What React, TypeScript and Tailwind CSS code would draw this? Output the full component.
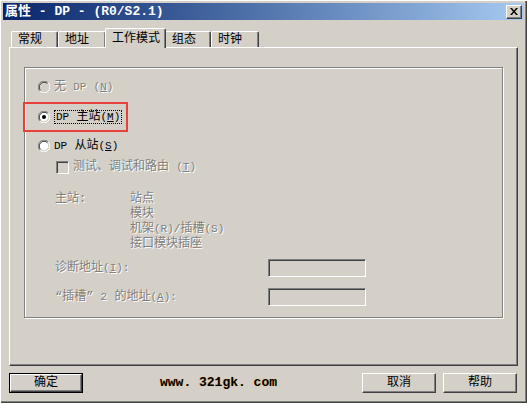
import React from "react";

const disabled = "text-[#808080] [text-shadow:1px_1px_0_#ffffff]";

// latin part in the half-width look of the old bitmap font
function L({ children }: { children: React.ReactNode }) {
  return <span className="text-[11px]">{children}</span>;
}

function Radio({ checked = false, off = false }: { checked?: boolean; off?: boolean }) {
  return (
    <svg width="12" height="12" viewBox="0 0 12 12" className="shrink-0">
      <circle cx="6" cy="6" r="4.6" fill={off ? "#d4d0c8" : "#ffffff"} />
      <path d="M1.8 10.2 A5.94 5.94 0 0 1 10.2 1.8" stroke="#808080" fill="none" />
      <path d="M10.2 1.8 A5.94 5.94 0 0 1 1.8 10.2" stroke="#ffffff" fill="none" />
      <path d="M2.54 9.46 A4.9 4.9 0 0 1 9.46 2.54" stroke="#404040" fill="none" />
      <path d="M9.46 2.54 A4.9 4.9 0 0 1 2.54 9.46" stroke="#d4d0c8" fill="none" />
      {checked && <circle cx="6" cy="6" r="2" fill="#000000" />}
    </svg>
  );
}

function Sunken({ className }: { className: string }) {
  return (
    <div
      className={`border border-t-[#808080] border-l-[#808080] border-b-white border-r-white bg-[#d4d0c8] shadow-[inset_1px_1px_0_#404040] ${className}`}
    />
  );
}

function Button({ label, isDefault = false, ml = "" }: { label: string; isDefault?: boolean; ml?: string }) {
  return (
    <div className={`${ml} w-[74px] h-[20px] ${isDefault ? "border border-black" : ""}`}>
      <div className="h-full border border-t-white border-l-white border-b-[#404040] border-r-[#404040] shadow-[inset_-1px_-1px_0_#808080] flex items-center justify-center text-[12px] text-black">
        {label}
      </div>
    </div>
  );
}

const tabs = [
  { label: "常规", w: "w-[47px]" },
  { label: "地址", w: "w-[48px]" },
  { label: "工作模式", w: "w-[61px]", active: true },
  { label: "组态", w: "w-[46px]" },
  { label: "时钟", w: "w-[48px]" },
];

export default function App() {
  return (
    <div className="relative w-[527px] h-[403px] bg-[#d4d0c8] flex flex-col shadow-[inset_1px_1px_0_#ffffff,inset_-1px_-1px_0_#404040,inset_-2px_-2px_0_#808080] font-['Liberation_Mono','Noto_Sans_CJK_SC',monospace] text-[12px] text-black overflow-hidden">
      {/* Title bar */}
      <div className="mx-[3px] mt-[3px] h-[17px] bg-linear-to-r from-[#0a246a] to-[#a6caf0] flex items-center justify-between pl-[2px] pr-[2px]">
        <span className="text-white font-bold text-[13px] leading-none">属性 - DP - (R0/S2.1)</span>
        <div className="w-[16px] h-[14px] bg-[#d4d0c8] border border-t-white border-l-white border-b-[#404040] border-r-[#404040] shadow-[inset_-1px_-1px_0_#808080] flex items-center justify-center">
          <svg width="8" height="7" viewBox="0 0 8 7">
            <path d="M0 0h2l2 2.5L6 0h2L5 3.5 8 7H6L4 4.5 2 7H0l3-3.5z" fill="#000" />
          </svg>
        </div>
      </div>

      {/* Tabs */}
      <div className="ml-[11px] mt-[8px] h-[19px] flex items-end">
        {tabs.map((t) => (
          <div
            key={t.label}
            className={`${t.w} ${
              t.active ? "h-[20px] -mb-[1px] -mx-[1px] z-10 pl-[6px]" : "h-[16px] pl-[6px]"
            } relative bg-[#d4d0c8] border-l border-t border-l-white border-t-white border-r border-r-[#404040] rounded-t-[2px] shadow-[inset_-1px_0_0_#808080] flex items-center text-[12px] leading-none`}
          >
            {t.label}
          </div>
        ))}
      </div>

      {/* Tab panel */}
      <div className="ml-[9px] w-[509px] h-[319px] border border-t-white border-l-white border-r-[#404040] border-b-[#404040] shadow-[inset_-1px_-1px_0_#808080] pt-[19px] pl-[14px]">
        <div className="w-[479px] h-[251px] border border-[#808080] shadow-[1px_1px_0_#ffffff,inset_1px_1px_0_#ffffff] pl-[13px]">
          <div className={`mt-[11px] h-[16px] flex items-center gap-[4px] ${disabled}`}>
            <Radio off />
            <span>
              无 <L>DP</L> <L>(<u>N</u>)</L>
            </span>
          </div>
          <div className="mt-[14px] h-[16px] flex items-center gap-[4px]">
            <Radio checked />
            <span className="border border-dotted border-black px-[1px] leading-[12px]">
              <L>DP</L> 主站<L>(<u>M</u>)</L>
            </span>
          </div>
          <div className="mt-[13px] h-[16px] flex items-center gap-[4px]">
            <Radio />
            <span>
              <L>DP</L> 从站<L>(<u>S</u>)</L>
            </span>
          </div>
          <div className={`mt-[5px] h-[16px] flex items-center gap-[4px] pl-[18px] ${disabled}`}>
            <Sunken className="w-[13px] h-[13px]" />
            <span>
              测试、调试和路由 <L>(<u>T</u>)</L>
            </span>
          </div>

          <div className={`mt-[17px] pl-[17px] flex leading-[15px] ${disabled}`}>
            <div className="w-[75px]">主站:</div>
            <div className="flex flex-col">
              <span>站点</span>
              <span>模块</span>
              <span>
                机架<L>(R)/</L>插槽<L>(S)</L>
              </span>
              <span>接口模块插座</span>
            </div>
          </div>

          <div className="mt-[7px] pl-[17px] flex items-center">
            <span className={`w-[213px] ${disabled}`}>
              诊断地址<L>(<u>I</u>):</L>
            </span>
            <Sunken className="w-[98px] h-[18px]" />
          </div>
          <div className="mt-[11px] pl-[17px] flex items-center">
            <span className={`w-[213px] ${disabled}`}>
              “插槽” <L>2</L> 的地址<L>(<u>A</u>):</L>
            </span>
            <Sunken className="w-[98px] h-[18px]" />
          </div>
        </div>
      </div>

      {/* Buttons */}
      <div className="mt-[7px] pl-[9px] flex items-center">
        <Button label="确定" isDefault />
        <span className="ml-[77px] font-bold text-[13px] text-black [text-shadow:0_0_1px_#e0a040]">www. 321gk. com</span>
        <Button label="取消" ml="ml-[85px]" />
        <Button label="帮助" ml="ml-[7px]" />
      </div>

      {/* red annotation frame */}
      <div className="absolute left-[23px] top-[102px] w-[105px] h-[30px] border-2 border-[#e8413c]" />
    </div>
  );
}
